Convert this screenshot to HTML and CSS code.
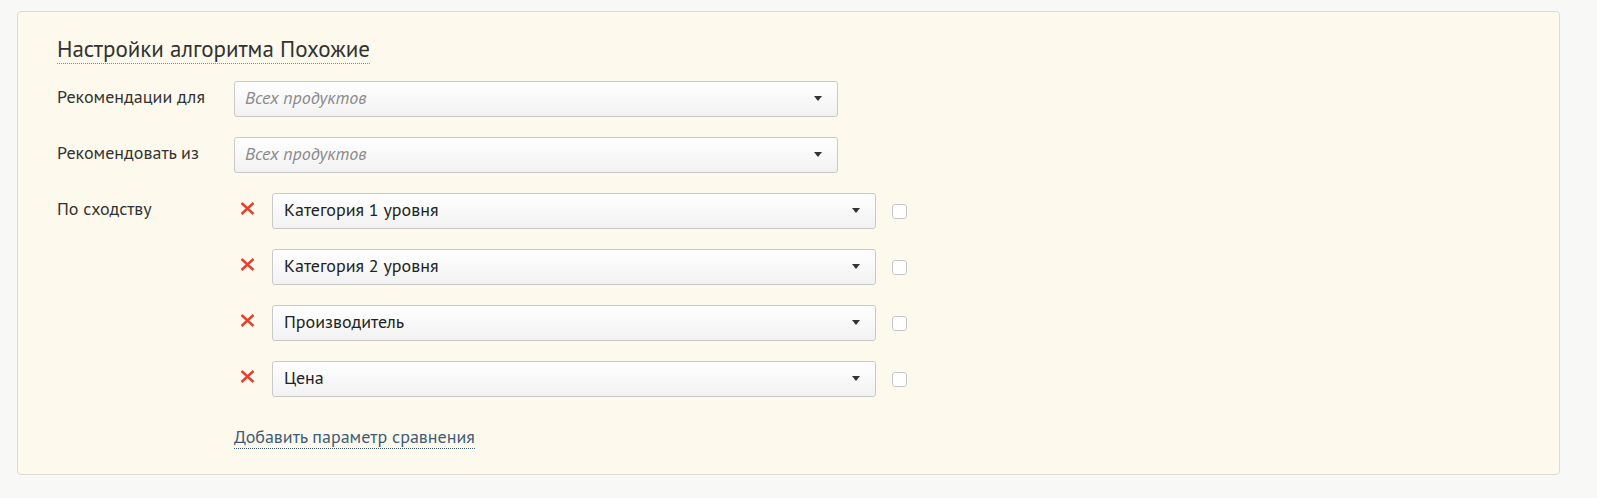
FILE: index.html
```html
<!DOCTYPE html>
<html lang="ru">
<head>
<meta charset="utf-8">
<title>Настройки алгоритма Похожие</title>
<link rel="stylesheet" href="styles.css">
</head>
<body>
<div class="panel">
  <h2 class="title"><span class="title-text">Настройки алгоритма Похожие</span></h2>

  <div class="row">
    <div class="label">Рекомендации для</div>
    <div class="select"><span class="placeholder">Всех продуктов</span><span class="arrow"></span></div>
  </div>

  <div class="row">
    <div class="label">Рекомендовать из</div>
    <div class="select"><span class="placeholder">Всех продуктов</span><span class="arrow"></span></div>
  </div>

  <div class="row">
    <div class="label">По сходству</div>
    <div class="params">
      <div class="param">
        <span class="remove"><svg width="15" height="13" viewBox="0 0 15 13"><path d="M1.5 1 L13.5 12 M13.5 1 L1.5 12" stroke="#e5402d" stroke-width="2.4" fill="none"/></svg></span>
        <div class="select"><span class="value">Категория 1 уровня</span><span class="arrow"></span></div>
        <span class="check"></span>
      </div>
      <div class="param">
        <span class="remove"><svg width="15" height="13" viewBox="0 0 15 13"><path d="M1.5 1 L13.5 12 M13.5 1 L1.5 12" stroke="#e5402d" stroke-width="2.4" fill="none"/></svg></span>
        <div class="select"><span class="value">Категория 2 уровня</span><span class="arrow"></span></div>
        <span class="check"></span>
      </div>
      <div class="param">
        <span class="remove"><svg width="15" height="13" viewBox="0 0 15 13"><path d="M1.5 1 L13.5 12 M13.5 1 L1.5 12" stroke="#e5402d" stroke-width="2.4" fill="none"/></svg></span>
        <div class="select"><span class="value">Производитель</span><span class="arrow"></span></div>
        <span class="check"></span>
      </div>
      <div class="param">
        <span class="remove"><svg width="15" height="13" viewBox="0 0 15 13"><path d="M1.5 1 L13.5 12 M13.5 1 L1.5 12" stroke="#e5402d" stroke-width="2.4" fill="none"/></svg></span>
        <div class="select"><span class="value">Цена</span><span class="arrow"></span></div>
        <span class="check"></span>
      </div>
      <a class="add-link" href="#">Добавить параметр сравнения</a>
    </div>
  </div>
</div>
</body>
</html>
```

FILE: styles.css
```css
html, body {
  margin: 0;
  padding: 0;
}
body {
  background: #f8f8f7;
  font-family: "PT Sans", "Open Sans", "Noto Sans", sans-serif;
  color: #333;
  padding: 11px 37px 0 17px;
}
.panel {
  background: #fdf9ed;
  border: 1px solid #dedbd3;
  border-radius: 4px;
  padding: 22px 40px 26px 39px;
  height: 464px;
  box-sizing: border-box;
}
.title {
  margin: 0 0 17px 0;
  font-size: 23px;
  font-weight: normal;
  line-height: 30px;
  color: #333;
}
.title-text {
  border-bottom: 1px dotted #8a8a8a;
}
.row {
  display: flex;
  align-items: flex-start;
  margin-bottom: 20px;
}
.label {
  width: 177px;
  flex: none;
  font-size: 18px;
  line-height: 24px;
  padding-top: 4px;
  color: #333;
}
.select {
  width: 604px;
  height: 36px;
  box-sizing: border-box;
  border: 1px solid #c9c9c9;
  border-radius: 3px;
  background: linear-gradient(#ffffff, #f2f2f2);
  display: flex;
  align-items: flex-start;
  justify-content: space-between;
  padding: 0 15px 0 10px;
  font-size: 18px;
  line-height: 31px;
}
.placeholder {
  font-style: italic;
  color: #8a8a8a;
}
.value {
  color: #222;
  padding-left: 1px;
}
.arrow {
  width: 0;
  height: 0;
  border-left: 4px solid transparent;
  border-right: 4px solid transparent;
  border-top: 5px solid #333;
  margin-top: 14px;
}
.params {
  display: flex;
  flex-direction: column;
  gap: 20px;
}
.param {
  display: flex;
  align-items: center;
}
.remove {
  width: 15px;
  height: 13px;
  margin: 9px 17px 0 6px;
  align-self: flex-start;
  display: flex;
}
.check {
  width: 13px;
  height: 13px;
  margin-left: 16px;
  border: 1px solid #c8c8c8;
  border-radius: 3px;
  background: #fff;
}
.add-link {
  align-self: flex-start;
  margin-top: 8px;
  font-size: 18px;
  line-height: 23px;
  color: #3e5d78;
  text-decoration: none;
  border-bottom: 1px dotted #3e5d78;
}
```
